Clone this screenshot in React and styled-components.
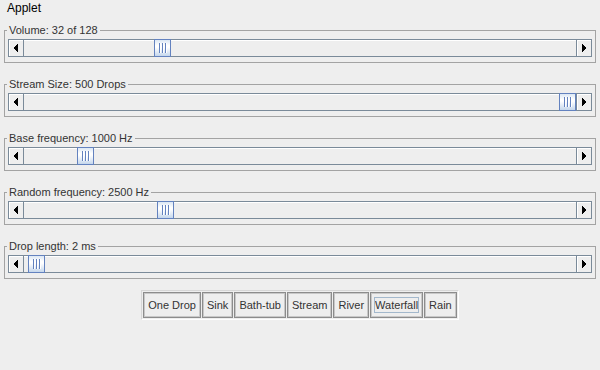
import React from 'react';
import styled, { createGlobalStyle } from 'styled-components';

const GlobalStyle = createGlobalStyle`
  html, body {
    margin: 0;
    padding: 0;
    background: #eeeeee;
  }
  body {
    font-family: "Liberation Sans", Arial, sans-serif;
    color: #333333;
  }
`;

const Page = styled.div`
  width: 600px;
  height: 370px;
  box-sizing: border-box;
  padding: 0 4px;
  background: #eeeeee;
`;

const Title = styled.div`
  font-size: 12px;
  line-height: 16px;
  padding-left: 3px;
  color: #000;
  margin-bottom: 8px;
`;

const Group = styled.fieldset`
  margin: 0 0 15px 0;
  padding: 2px 3px 5px 3px;
  border: 1px solid #a3a3a3;
  min-width: 0;
`;

const Legend = styled.legend`
  font-size: 11px;
  line-height: 13px;
  padding: 0 2px;
  margin-left: -1px;
  color: #333333;
`;

const ScrollBar = styled.div`
  display: flex;
  height: 18px;
`;

const ArrowButton = styled.div`
  width: 16px;
  box-sizing: border-box;
  border: 1px solid #7a8a99;
  background: #eeeeee;
  box-shadow: inset 1px 1px 0 #ffffff;
  display: flex;
  align-items: center;
  justify-content: center;
`;

const Track = styled.div`
  flex: 1;
  position: relative;
  box-sizing: border-box;
  border-top: 1px solid #7a8a99;
  border-bottom: 1px solid #7a8a99;
  background: #eeeeee;
  box-shadow: inset 0 1px 0 #ffffff;
`;

const Thumb = styled.div`
  position: absolute;
  top: -1px;
  bottom: -1px;
  width: 17px;
  box-sizing: border-box;
  border: 1px solid #6382bf;
  background: linear-gradient(#dbe7f4 0%, #ffffff 35%, #ffffff 45%, #c5d7ec 100%);
  display: flex;
  align-items: center;
  justify-content: center;
  gap: 1px;
`;

const Grip = styled.span`
  width: 1px;
  height: 10px;
  background: #6382bf;
  box-shadow: 1px 0 0 #ffffff;
  margin-right: 1px;
`;

const ButtonPanel = styled.div`
  display: flex;
  justify-content: center;
  margin-top: -4px;
`;

const ButtonFrame = styled.div`
  display: flex;
  gap: 1px;
  padding: 1px;
  border: 1px solid #d6d6d6;
  border-right-color: #ffffff;
  border-bottom-color: #ffffff;
`;

const Button = styled.div`
  height: 26px;
  box-sizing: border-box;
  padding: 0 4px;
  border: 1px solid #8c8c8c;
  box-shadow: inset 0 0 0 1px #c8c8c8;
  background: #eeeeee;
  font-size: 11px;
  color: #333333;
  display: flex;
  align-items: center;
  justify-content: center;
`;

const FocusLabel = styled.span`
  outline: 1px solid ${(p) => (p.$focused ? '#a3b8cc' : 'transparent')};
  padding: 1px 0;
`;

const LeftArrow = () => (
  <svg width="4" height="8" viewBox="0 0 4 8" shapeRendering="crispEdges">
    <rect x="0" y="3" width="1" height="2" fill="#000" />
    <rect x="1" y="2" width="1" height="4" fill="#000" />
    <rect x="2" y="1" width="1" height="6" fill="#000" />
    <rect x="3" y="0" width="1" height="8" fill="#000" />
  </svg>
);

const RightArrow = () => (
  <svg width="4" height="8" viewBox="0 0 4 8" shapeRendering="crispEdges">
    <rect x="0" y="0" width="1" height="8" fill="#000" />
    <rect x="1" y="1" width="1" height="6" fill="#000" />
    <rect x="2" y="2" width="1" height="4" fill="#000" />
    <rect x="3" y="3" width="1" height="2" fill="#000" />
  </svg>
);

const sliders = [
  { label: 'Volume: 32 of 128', thumb: 130 },
  { label: 'Stream Size: 500 Drops', thumb: 535 },
  { label: 'Base frequency: 1000 Hz', thumb: 53 },
  { label: 'Random frequency: 2500 Hz', thumb: 133 },
  { label: 'Drop length: 2 ms', thumb: 4 },
];

const presets = ['One Drop', 'Sink', 'Bath-tub', 'Stream', 'River', 'Waterfall', 'Rain'];

const Slider = ({ label, thumb }) => (
  <Group>
    <Legend>{label}</Legend>
    <ScrollBar>
      <ArrowButton>
        <LeftArrow />
      </ArrowButton>
      <Track>
        <Thumb style={{ left: thumb }}>
          <Grip />
          <Grip />
          <Grip />
        </Thumb>
      </Track>
      <ArrowButton>
        <RightArrow />
      </ArrowButton>
    </ScrollBar>
  </Group>
);

const App = () => (
  <Page>
    <GlobalStyle />
    <Title>Applet</Title>
    {sliders.map((s) => (
      <Slider key={s.label} label={s.label} thumb={s.thumb} />
    ))}
    <ButtonPanel>
      <ButtonFrame>
        {presets.map((name) => (
          <Button key={name}>
            <FocusLabel $focused={name === 'Waterfall'}>{name}</FocusLabel>
          </Button>
        ))}
      </ButtonFrame>
    </ButtonPanel>
  </Page>
);

export default App;
